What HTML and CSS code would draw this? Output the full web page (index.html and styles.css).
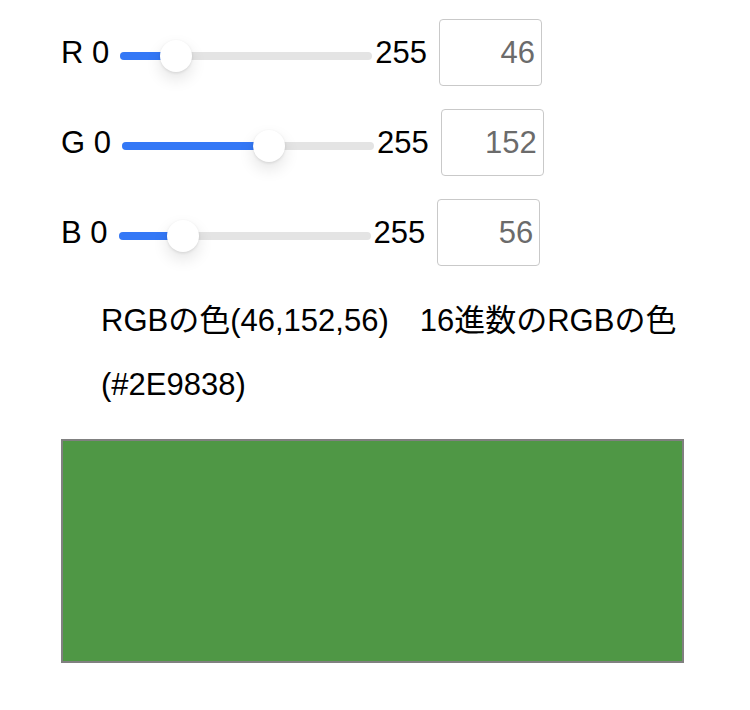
FILE: index.html
```html
<!DOCTYPE html>
<html lang="ja">
<head>
<meta charset="utf-8">
<title>RGB</title>
<link rel="stylesheet" href="styles.css">
</head>
<body>
<div class="app">
  <div class="rows">
    <div class="row" style="--v:46">
      <span class="label">R 0</span>
      <div class="track"><div class="fill"></div><div class="thumb"></div></div>
      <span class="max">255</span>
      <div class="num">46</div>
    </div>
    <div class="row" style="--v:152">
      <span class="label">G 0</span>
      <div class="track"><div class="fill"></div><div class="thumb"></div></div>
      <span class="max">255</span>
      <div class="num">152</div>
    </div>
    <div class="row" style="--v:56">
      <span class="label">B 0</span>
      <div class="track"><div class="fill"></div><div class="thumb"></div></div>
      <span class="max">255</span>
      <div class="num">56</div>
    </div>
  </div>
  <p class="info">RGBの色(46,152,56)　16進数のRGBの色(#2E9838)</p>
  <div class="swatch"></div>
</div>
</body>
</html>
```
FILE: styles.css
```css
html, body {
  margin: 0;
  padding: 0;
  background: #fff;
}
body {
  font-family: "Liberation Sans", Arial, "Noto Sans CJK JP", sans-serif;
  color: #000;
}
.app {
  padding: 19px 0 0 61px;
  width: 623px;
}
.rows {
  display: flex;
  flex-direction: column;
  gap: 23px;
}
.row {
  display: flex;
  align-items: center;
  font-size: 31px;
}
.label {
  white-space: nowrap;
}
.track {
  position: relative;
  width: 252px;
  height: 8px;
  margin: 6px 3px 0 11px;
  background: #e4e4e4;
  border-radius: 4px;
}
.fill {
  height: 100%;
  width: calc(16px + 220px * var(--v) / 255);
  background: #3478f6;
  border-radius: 4px;
}
.thumb {
  position: absolute;
  top: -12px;
  left: calc(220px * var(--v) / 255);
  width: 32px;
  height: 32px;
  border-radius: 50%;
  background: #fff;
  box-shadow: 0 7px 16px rgba(0, 0, 0, 0.11), 0 1px 3px rgba(0, 0, 0, 0.1);
}
.max {
  white-space: nowrap;
}
.num {
  box-sizing: border-box;
  width: 103px;
  height: 67px;
  margin-left: 12px;
  border: 1px solid #c9c9c9;
  border-radius: 4px;
  padding-right: 6px;
  display: flex;
  align-items: center;
  justify-content: flex-end;
  color: #6b6b6b;
  font-size: 31px;
}
.info {
  margin: 23px 0 0 40px;
  font-size: 31px;
  line-height: 64px;
}
.swatch {
  box-sizing: border-box;
  margin-top: 22px;
  width: 623px;
  height: 224px;
  border: 2px solid #808080;
  background: #4f9745;
}
```
